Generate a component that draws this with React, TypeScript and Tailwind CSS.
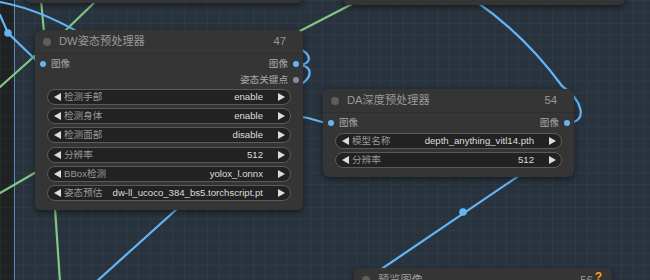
import React from "react";

const FONT = "font-['Liberation_Sans','Noto_Sans_CJK_SC',sans-serif]";

function LeftArrow() {
  return (
    <svg width="7" height="8" viewBox="0 0 7 8" aria-hidden className="shrink-0">
      <polygon points="7,0 7,8 0,4" fill="#dddddd" />
    </svg>
  );
}

function RightArrow() {
  return (
    <svg width="7" height="8" viewBox="0 0 7 8" aria-hidden className="shrink-0">
      <polygon points="0,0 0,8 7,4" fill="#dddddd" />
    </svg>
  );
}

// combo / number widget pill, ComfyUI style
function Widget({ label, value }: { label: string; value: string }) {
  return (
    <div className="flex h-[16px] items-center rounded-full border border-[#5a5a5a] bg-[#222222] pl-[6px] pr-[5px] text-[9.6px] leading-[14px]">
      <LeftArrow />
      <span className="ml-[3px] whitespace-nowrap text-[#999999]">{label}</span>
      <span className="ml-2 flex-1 truncate text-right text-[#dddddd]">{value}</span>
      <span className="w-[15px] shrink-0" />
      <RightArrow />
    </div>
  );
}

function Title({ name, id }: { name: string; id: string }) {
  return (
    <div className="flex h-[24px] shrink-0 items-center border-b border-[#2e2e2e] pl-[8px] pr-[17px]">
      <span className="h-[8px] w-[8px] rounded-full bg-[#5e5e5e]" />
      <span className="ml-[8px] flex-1 text-[11.2px] text-[#999999]">{name}</span>
      <span className="text-[11.2px] text-[#999999]">{id}</span>
    </div>
  );
}

function SlotRow({
  input,
  output,
  outColor = "bg-[#64b5f6]",
}: {
  input?: string;
  output?: string;
  outColor?: string;
}) {
  return (
    <div className="flex h-[16px] items-center justify-between text-[9.6px] text-[#aaaaaa]">
      <div className="flex items-center gap-[5px] pl-[5px]">
        {input && (
          <>
            <span className="h-[6px] w-[6px] rounded-full bg-[#64b5f6]" />
            <span>{input}</span>
          </>
        )}
      </div>
      <div className="flex items-center gap-[5px] pr-[4px]">
        {output && (
          <>
            <span>{output}</span>
            <span className={`h-[6px] w-[6px] rounded-full ${outColor}`} />
          </>
        )}
      </div>
    </div>
  );
}

function Links() {
  const blue = "#64b5f6";
  const green = "#81c784";
  return (
    <svg className="absolute inset-0" width="650" height="280" aria-hidden fill="none" strokeWidth="2.2" strokeLinecap="round">
      {/* green links */}
      <path d="M41 0 L44 32" stroke={green} />
      <path d="M0 87 L38 53" stroke={green} />
      <path d="M97 0 L66 30" stroke={green} />
      <path d="M356 2 L298 32" stroke={green} />
      <path d="M0 193 L38 171" stroke={green} />
      <path d="M55 208 L60 282" stroke={green} />
      {/* blue links */}
      <path d="M0 2 Q45 10 100 45" stroke={blue} />
      <path d="M0 15 L8 33 L40 64" stroke={blue} />
      <path d="M296 65 C312 65 312 56 302 50" stroke={blue} />
      <path d="M296 65 C314 65 313 77 300 85" stroke={blue} />
      <path d="M300 117 C312 117 318 123 330 123" stroke={blue} />
      <path d="M566 123 C590 123 582 100 562 86 Q525 35 474 0" stroke={blue} />
      <path d="M520 175 L380 270" stroke={blue} />
      <path d="M178 208 L96 282" stroke={blue} />
      <circle cx="8" cy="33" r="3.8" fill={blue} />
      <circle cx="463" cy="212" r="3.8" fill={blue} />
    </svg>
  );
}

export default function App() {
  return (
    <div
      className={`relative h-[280px] w-[650px] overflow-hidden bg-[#28333e] bg-[linear-gradient(to_right,#2e3a46_1px,transparent_1px),linear-gradient(to_bottom,#2e3a46_1px,transparent_1px)] bg-[size:11.5px_11.5px] ${FONT}`}
    >
      {/* dark group strip on the far left */}
      <div className="absolute left-0 top-0 h-full w-[15px] border-r border-[#5b8ab5] bg-[#1f2123] bg-[linear-gradient(to_right,#262829_1px,transparent_1px),linear-gradient(to_bottom,#262829_1px,transparent_1px)] bg-[size:11.5px_11.5px]" />

      <Links />

      {/* nodes cut off at the top edge */}
      <div className="absolute left-[25px] top-[-40px] h-[43px] w-[278px] rounded-[6px] bg-[#353535] shadow-[0_2px_6px_rgba(0,0,0,0.5)]" />
      <div className="absolute left-[343px] top-[-40px] h-[45px] w-[282px] rounded-[6px] bg-[#353535] shadow-[0_2px_6px_rgba(0,0,0,0.5)]" />

      {/* DW pose preprocessor */}
      <div className="absolute left-[35px] top-[30px] flex h-[180px] w-[268px] flex-col rounded-[6px] bg-[#353535] shadow-[0_2px_6px_rgba(0,0,0,0.5)]">
        <Title name="DW姿态预处理器" id="47" />
        <div className="pt-[2.5px]">
          <SlotRow input="图像" output="图像" />
          <SlotRow output="姿态关键点" outColor="bg-[#8a8a99]" />
        </div>
        <div className="mx-[12px] mt-[0.5px] flex flex-col gap-[3.2px]">
          <Widget label="检测手部" value="enable" />
          <Widget label="检测身体" value="enable" />
          <Widget label="检测面部" value="disable" />
          <Widget label="分辨率" value="512" />
          <Widget label="BBox检测" value="yolox_l.onnx" />
          <Widget label="姿态预估" value="dw-ll_ucoco_384_bs5.torchscript.pt" />
        </div>
      </div>

      {/* DA depth preprocessor */}
      <div className="absolute left-[323px] top-[89px] flex h-[88px] w-[251px] flex-col rounded-[6px] bg-[#353535] shadow-[0_2px_6px_rgba(0,0,0,0.5)]">
        <Title name="DA深度预处理器" id="54" />
        <div className="pt-[2px]">
          <SlotRow input="图像" output="图像" />
        </div>
        <div className="mx-[12px] mt-[1.5px] flex flex-col gap-[3.2px]">
          <Widget label="模型名称" value="depth_anything_vitl14.pth" />
          <Widget label="分辨率" value="512" />
        </div>
      </div>

      {/* preview image, cut off at the bottom */}
      <div className="absolute left-[354px] top-[268px] flex h-[80px] w-[258px] flex-col rounded-[6px] bg-[#353535] shadow-[0_2px_6px_rgba(0,0,0,0.5)]">
        <div className="flex h-[24px] items-center pl-[8px] pr-[10px]">
          <span className="h-[8px] w-[8px] rounded-full bg-[#5e5e5e]" />
          <span className="ml-[8px] flex-1 text-[11.2px] text-[#999999]">预览图像</span>
          <span className="text-[11.2px] text-[#999999]">56</span>
          <span className="ml-[2px] -translate-y-[3px] text-[12px] font-bold text-[#f5a623]">?</span>
        </div>
      </div>
    </div>
  );
}
